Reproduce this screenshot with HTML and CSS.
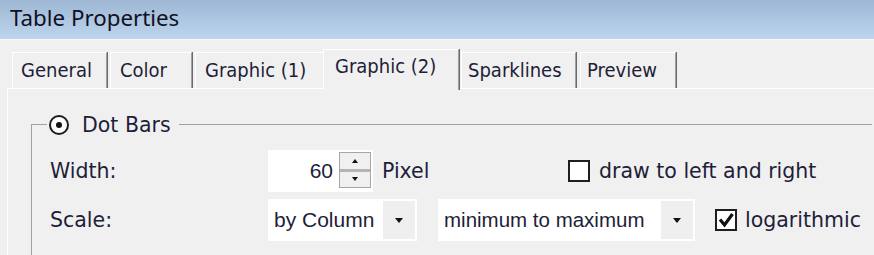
FILE: index.html
```html
<!DOCTYPE html>
<html lang="en">
<head>
  <meta charset="UTF-8">
  <meta name="viewport" content="width=device-width, initial-scale=1.0">
  <title>Table Properties</title>
  <link rel="stylesheet" href="styles.css">
</head>
<body>
  <div class="dialog">
    <div class="title-bar">Table Properties</div>

    <!-- Tab strip -->
    <div class="tabs">
      <div class="tab tab-general">General</div>
      <div class="tab tab-color">Color</div>
      <div class="tab tab-graphic1">Graphic (1)</div>
      <div class="tab tab-graphic2 active">Graphic (2)</div>
      <div class="tab tab-sparklines">Sparklines</div>
      <div class="tab tab-preview">Preview</div>
    </div>

    <!-- Tab page -->
    <div class="panel">
      <fieldset class="group">
        <legend class="group-title"><span class="radio checked"></span>Dot Bars</legend>

        <div class="field-row row-width">
          <span class="field-label">Width:</span>
          <div class="spin-box">
            <span class="spin-value">60</span>
            <div class="spin-buttons">
              <span class="spin-btn up"></span>
              <span class="spin-btn down"></span>
            </div>
          </div>
          <span class="unit">Pixel</span>
          <label class="check">
            <span class="check-box"></span>
            draw to left and right
          </label>
        </div>

        <div class="field-row row-scale">
          <span class="field-label">Scale:</span>
          <div class="combo combo-column">
            <span class="combo-text">by Column</span>
            <span class="combo-btn"></span>
          </div>
          <div class="combo combo-range">
            <span class="combo-text">minimum to maximum</span>
            <span class="combo-btn"></span>
          </div>
          <label class="check check-log">
            <span class="check-box checked">
              <svg width="18" height="18" viewBox="0 0 18 18">
                <path d="M3 8.5 L7.5 14 L15.5 3" fill="none" stroke="#111" stroke-width="3.2" stroke-linejoin="miter"/>
              </svg>
            </span>
            logarithmic
          </label>
        </div>
      </fieldset>
    </div>
  </div>
</body>
</html>
```

FILE: styles.css
```css
/* Base */
body {
  margin: 0;
  background: #f0f0f0;
  font-family: "DejaVu Sans", sans-serif;
  font-size: 20.5px;
  color: #1e1e38;
}

.dialog {
  width: 874px;
  height: 255px;
  overflow: hidden;
}

/* Title bar */
.title-bar {
  height: 40px;
  box-sizing: border-box;
  padding: 3px 0 0 10px;
  font-family: "Noto Sans", sans-serif;
  font-size: 22.3px;
  line-height: 30px;
  color: #10101e;
  background: linear-gradient(#9db7d4, #bdd5ee);
  border-bottom: 1px solid #f7f7f7;
}

/* Tabs */
.tabs {
  display: flex;
  align-items: flex-end;
  height: 48px;
  padding-left: 12px;
  box-sizing: border-box;
  font-family: "DejaVu Sans Condensed", "DejaVu Sans", sans-serif;
  font-size: 20px;
}

.tab {
  height: 36px;
  box-sizing: border-box;
  padding-left: 8px;
  line-height: 34px;
  border-top: 1px solid #fff;
  border-left: 1px solid #fff;
  border-right: 1px solid #a0a0a0;
  box-shadow: 1px 0 0 #6a6a6a;
  white-space: nowrap;
}

.tab-general { width: 95px; }
.tab-color { width: 82px; margin-left: 3px; padding-left: 9px; }
.tab-graphic1 { width: 130px; margin-left: 3px; padding-left: 9px; }

.tab.active {
  position: relative;
  z-index: 1;
  width: 136px;
  height: 41px;
  margin-left: -2px;
  margin-bottom: -2px;
  padding-left: 11px;
  line-height: 32px;
  background: #f0f0f0;
}

.tab-sparklines { width: 115px; margin-left: 2px; padding-left: 6px; }
.tab-preview { width: 96px; margin-left: 4px; padding-left: 6px; }

/* Tab page */
.panel {
  margin-left: 7px;
  padding-top: 23px;
  height: 143px;
  border-top: 1px solid #fff;
  border-left: 1px solid #fff;
}

.group {
  box-sizing: border-box;
  margin: 0 2px 0 23px;
  padding: 0 0 0 18px;
  min-width: 0;
  height: 143px;
  border: 1px solid #a0a0a0;
  border-right: none;
  border-bottom: none;
}

.group-title {
  display: flex;
  align-items: center;
  height: 25px;
  margin-left: -3px;
  padding: 0 8px 0 2px;
}

.radio {
  width: 20px;
  height: 20px;
  box-sizing: border-box;
  margin-right: 13px;
  border: 2px solid #1c1c1c;
  border-radius: 50%;
  background: #fdfdfd;
  display: flex;
  align-items: center;
  justify-content: center;
}

.radio.checked::before {
  content: "";
  width: 6px;
  height: 6px;
  border-radius: 50%;
  background: #111;
}

/* Field rows */
.field-row {
  display: flex;
  align-items: center;
  height: 42px;
}

.row-width {
  margin-top: 13px;
}

.row-scale {
  margin-top: 7px;
}

.field-label {
  width: 218px;
  flex-shrink: 0;
}

/* Spin box */
.spin-box {
  width: 105px;
  height: 42px;
  display: flex;
  align-items: flex-start;
  background: #fff;
}

.spin-value {
  flex: 1;
  text-align: right;
  padding-right: 6px;
  font-family: "Liberation Sans", sans-serif;
  font-size: 21px;
  line-height: 42px;
}

.spin-buttons {
  width: 32px;
  height: 36px;
  margin: 2px 2px 0 0;
  box-sizing: border-box;
  border: 1px solid #a6a6a6;
  display: flex;
  flex-direction: column;
}

.spin-btn {
  flex: 1;
  display: flex;
  align-items: center;
  justify-content: center;
  background: #f0f0f0;
}

.spin-btn.up {
  border-bottom: 3px solid #b4b4b4;
}

.spin-btn.up::before {
  content: "";
  border-left: 3px solid transparent;
  border-right: 3px solid transparent;
  border-bottom: 4px solid #111;
}

.spin-btn.down::before {
  content: "";
  border-left: 3px solid transparent;
  border-right: 3px solid transparent;
  border-top: 4px solid #111;
}

.unit {
  width: 186px;
  margin-left: 9px;
}

/* Check boxes */
.check {
  display: flex;
  align-items: center;
  gap: 9px;
  white-space: nowrap;
}

.check-log {
  margin-left: 20px;
  gap: 8px;
}

.check-box {
  width: 22px;
  height: 22px;
  box-sizing: border-box;
  border: 2px solid #1e1e1e;
  background: #fff;
  display: flex;
}

/* Combo boxes */
.combo {
  height: 42px;
  box-sizing: border-box;
  padding: 2px;
  display: flex;
  background: #fff;
  font-family: "Liberation Sans", sans-serif;
  font-size: 21px;
}

.combo-column { width: 149px; }
.combo-range { width: 257px; margin-left: 21px; font-size: 20.5px; }

.combo-text {
  flex: 1;
  padding-left: 4px;
  line-height: 38px;
  white-space: nowrap;
}

.combo-btn {
  width: 32px;
  display: flex;
  align-items: center;
  justify-content: center;
  background: #efefef;
}

.combo-btn::before {
  content: "";
  border-left: 4px solid transparent;
  border-right: 4px solid transparent;
  border-top: 5px solid #111;
}
```
